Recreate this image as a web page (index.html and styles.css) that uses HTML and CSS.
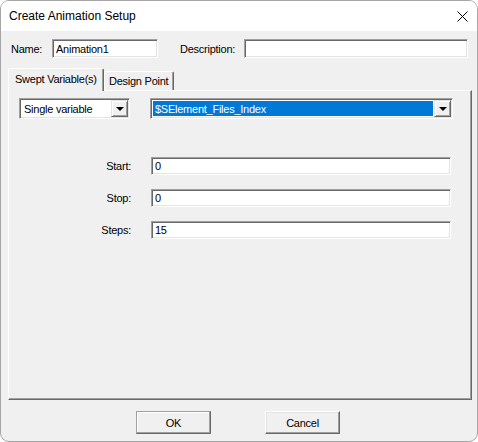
FILE: index.html
```html
<!DOCTYPE html>
<html>
<head>
<meta charset="utf-8">
<link rel="stylesheet" href="styles.css">
</head>
<body>
<div class="window">
  <div class="titlebar">
    <span class="title">Create Animation Setup</span>
    <svg class="close" width="11" height="11" viewBox="0 0 11 11"><path d="M0.5 0.5L10.5 10.5M10.5 0.5L0.5 10.5" stroke="#000" stroke-width="1" fill="none"/></svg>
  </div>
  <div class="body">
    <div class="row-top">
      <span class="lbl name-lbl">Name:</span>
      <div class="edit name-edit">Animation1</div>
      <span class="lbl desc-lbl">Description:</span>
      <div class="edit desc-edit"></div>
    </div>
    <div class="tabs">
      <div class="tab active">Swept Variable(s)</div>
      <div class="tab">Design Point</div>
    </div>
    <div class="panel">
      <div class="combos">
        <div class="combo combo-mode">
          <span class="combo-text">Single variable</span>
          <span class="drop"><span class="tri"></span></span>
        </div>
        <div class="combo combo-var">
          <span class="combo-text selected">$SElement_Files_Index</span>
          <span class="drop"><span class="tri"></span></span>
        </div>
      </div>
      <div class="fields">
        <span class="flabel">Start:</span><div class="edit field">0</div>
        <span class="flabel">Stop:</span><div class="edit field">0</div>
        <span class="flabel">Steps:</span><div class="edit field">15</div>
      </div>
    </div>
    <div class="buttons">
      <button class="btn default">OK</button>
      <button class="btn">Cancel</button>
    </div>
  </div>
</div>
</body>
</html>
```

FILE: styles.css
```css
html, body {
  margin: 0;
  padding: 0;
  background: #ffffff;
}
body {
  font-family: "Liberation Sans", Arial, sans-serif;
  font-size: 11px;
  letter-spacing: -0.25px;
  color: #000;
}
.window {
  box-sizing: border-box;
  width: 478px;
  height: 442px;
  border: 1px solid #a6a6a6;
  border-radius: 9px;
  overflow: hidden;
  background: #f0f0f0;
  display: flex;
  flex-direction: column;
}
.titlebar {
  height: 30px;
  flex: 0 0 30px;
  background: #ffffff;
  display: flex;
  align-items: center;
  justify-content: space-between;
  padding: 0 9px 0 8px;
}
.title {
  font-size: 12px;
  letter-spacing: 0;
  color: #000;
}
.close {
  display: block;
}
.body {
  display: flex;
  flex-direction: column;
}
.row-top {
  display: flex;
  align-items: center;
  padding-left: 10px;
  margin-top: 8px;
  height: 19px;
}
.lbl {
  display: block;
}
.name-lbl {
  width: 41px;
}
.desc-lbl {
  width: 64px;
  margin-left: 22px;
}
.edit {
  box-sizing: border-box;
  background: #fff;
  border: 1px solid;
  border-color: #a0a0a0 #ffffff #ffffff #a0a0a0;
  box-shadow: inset 1px 1px 0 #696969, inset -1px -1px 0 #e3e3e3;
  display: flex;
  align-items: center;
  padding: 0 3px;
  white-space: nowrap;
}
.name-edit {
  width: 106px;
  height: 19px;
}
.desc-edit {
  width: 224px;
  height: 19px;
}
.tabs {
  display: flex;
  align-items: flex-end;
  margin-top: 10px;
  margin-left: 7px;
  height: 22px;
  position: relative;
  z-index: 1;
}
.tab {
  box-sizing: border-box;
  height: 19px;
  width: 70px;
  border-top: 1px solid #fff;
  border-left: 1px solid #fff;
  border-right: 1px solid #696969;
  box-shadow: inset -1px 0 0 #a0a0a0;
  border-radius: 2px 2px 0 0;
  padding-left: 4px;
  display: flex;
  align-items: center;
  white-space: nowrap;
}
.tab.active {
  width: 96px;
  height: 23px;
  margin-bottom: -1px;
  padding-left: 6px;
  padding-bottom: 2px;
  background: #f0f0f0;
}
.panel {
  box-sizing: border-box;
  margin-left: 7px;
  width: 464px;
  height: 310px;
  border-top: 1px solid #fff;
  border-left: 1px solid #fff;
  border-right: 1px solid #696969;
  border-bottom: 1px solid #696969;
  box-shadow: inset -1px -1px 0 #a0a0a0;
  padding: 7px 0 0 10px;
}
.combos {
  display: flex;
  gap: 20px;
}
.combo {
  box-sizing: border-box;
  height: 21px;
  background: #fff;
  border: 1px solid;
  border-color: #a0a0a0 #ffffff #ffffff #a0a0a0;
  box-shadow: inset 1px 1px 0 #696969, inset -1px -1px 0 #e3e3e3;
  padding: 1px;
  display: flex;
  align-items: stretch;
}
.combo-mode {
  width: 111px;
}
.combo-var {
  width: 303px;
}
.combo-text {
  flex: 1;
  display: flex;
  align-items: center;
  padding-left: 3px;
  white-space: nowrap;
}
.combo-text.selected {
  background: #0078d7;
  color: #fff;
  margin: 1px;
  padding-left: 2px;
}
.drop {
  box-sizing: border-box;
  width: 17px;
  background: #f0f0f0;
  border: 1px solid;
  border-color: #e3e3e3 #696969 #696969 #e3e3e3;
  box-shadow: inset 1px 1px 0 #fff, inset -1px -1px 0 #a0a0a0;
  display: flex;
  align-items: center;
  justify-content: center;
}
.tri {
  width: 0;
  height: 0;
  border-left: 4px solid transparent;
  border-right: 4px solid transparent;
  border-top: 4px solid #000;
  margin-top: 1px;
}
.fields {
  display: grid;
  grid-template-columns: 112px 300px;
  grid-template-rows: 18px 18px 18px;
  column-gap: 20px;
  row-gap: 14px;
  margin-top: 38px;
}
.flabel {
  text-align: right;
  align-self: center;
}
.field {
  height: 18px;
}
.buttons {
  display: flex;
  justify-content: center;
  gap: 54px;
  margin-top: 11px;
  padding-right: 2px;
}
.btn {
  box-sizing: border-box;
  width: 75px;
  height: 23px;
  font-family: "Liberation Sans", Arial, sans-serif;
  font-size: 11px;
  letter-spacing: -0.25px;
  color: #000;
  background: #f0f0f0;
  border: 1px solid;
  border-color: #ffffff #696969 #696969 #ffffff;
  box-shadow: inset -1px -1px 0 #a0a0a0, inset 1px 1px 0 #e3e3e3;
  padding: 0;
  margin: 0;
}
.btn.default {
  border-color: #a0a0a0 #696969 #696969 #a0a0a0;
  box-shadow: inset -1px -1px 0 #a0a0a0, inset 1px 1px 0 #ffffff;
}
```
